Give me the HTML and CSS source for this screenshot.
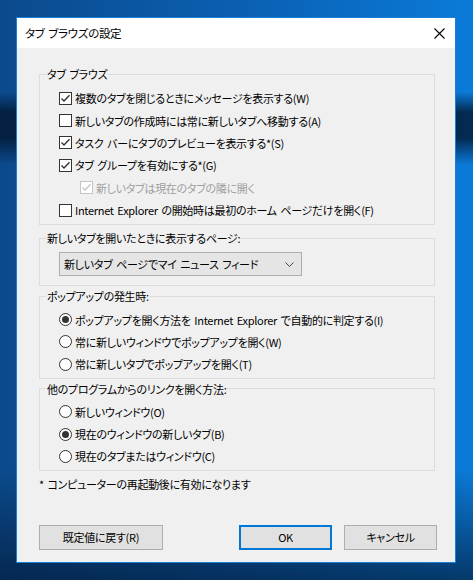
FILE: index.html
```html
<!DOCTYPE html>
<html lang="ja">
<head>
<meta charset="utf-8">
<title>タブ ブラウズの設定</title>
<link rel="stylesheet" href="styles.css">
</head>
<body>
<div class="dialog">
  <div class="titlebar">
    <span class="title">タブ ブラウズの設定</span>
    <span class="close" aria-label="閉じる">
      <svg width="11" height="11" viewBox="0 0 11 11"><path d="M0.5 0.5 L10.5 10.5 M10.5 0.5 L0.5 10.5" stroke="#000" stroke-width="1.1" fill="none"/></svg>
    </span>
  </div>

  <div class="content">
    <fieldset class="group group-tabs">
      <legend>タブ ブラウズ</legend>
      <label class="opt"><span class="box"><svg viewBox="0 0 13 13"><polyline points="2.5,6.5 5,9 10.5,3.2" class="tick"/></svg></span>複数のタブを閉じるときにメッセージを表示する(W)</label>
      <label class="opt"><span class="box"></span>新しいタブの作成時には常に新しいタブへ移動する(A)</label>
      <label class="opt"><span class="box"><svg viewBox="0 0 13 13"><polyline points="2.5,6.5 5,9 10.5,3.2" class="tick"/></svg></span>タスク バーにタブのプレビューを表示する*(S)</label>
      <label class="opt"><span class="box"><svg viewBox="0 0 13 13"><polyline points="2.5,6.5 5,9 10.5,3.2" class="tick"/></svg></span>タブ グループを有効にする*(G)</label>
      <label class="opt sub disabled"><span class="box"><svg viewBox="0 0 13 13"><polyline points="2.5,6.5 5,9 10.5,3.2" class="tick"/></svg></span>新しいタブは現在のタブの隣に開く</label>
      <label class="opt"><span class="box"></span>Internet Explorer の開始時は最初のホーム ページだけを開く(F)</label>
    </fieldset>

    <fieldset class="group group-newtab">
      <legend>新しいタブを開いたときに表示するページ:</legend>
      <div class="select">
        <span>新しいタブ ページでマイ ニュース フィード</span>
        <svg width="9" height="5" viewBox="0 0 9 5"><polyline points="0.5,0.5 4.5,4.5 8.5,0.5" fill="none" stroke="#444" stroke-width="1"/></svg>
      </div>
    </fieldset>

    <fieldset class="group group-popup">
      <legend>ポップアップの発生時:</legend>
      <label class="opt"><span class="radio on"></span>ポップアップを開く方法を Internet Explorer で自動的に判定する(I)</label>
      <label class="opt"><span class="radio"></span>常に新しいウィンドウでポップアップを開く(W)</label>
      <label class="opt"><span class="radio"></span>常に新しいタブでポップアップを開く(T)</label>
    </fieldset>

    <fieldset class="group group-links">
      <legend>他のプログラムからのリンクを開く方法:</legend>
      <label class="opt"><span class="radio"></span>新しいウィンドウ(O)</label>
      <label class="opt"><span class="radio on"></span>現在のウィンドウの新しいタブ(B)</label>
      <label class="opt"><span class="radio"></span>現在のタブまたはウィンドウ(C)</label>
    </fieldset>

    <p class="note">* コンピューターの再起動後に有効になります</p>

    <div class="buttons">
      <button class="btn btn-reset">既定値に戻す(R)</button>
      <span class="spacer"></span>
      <button class="btn btn-ok">OK</button>
      <button class="btn btn-cancel">キャンセル</button>
    </div>
  </div>
</div>
</body>
</html>
```

FILE: styles.css
```css
* {
  box-sizing: border-box;
}

html, body {
  height: 100%;
}

body {
  margin: 0;
  padding: 17px 0 0 16px;
  font-family: "Noto Sans CJK JP", "Noto Sans", sans-serif;
  font-size: 11px;
  letter-spacing: -0.3px;
  word-spacing: 1.5px;
  font-feature-settings: "palt";
  color: #000;
  overflow: hidden;
  background:
    linear-gradient(180deg,
      rgba(2, 22, 48, 0) 0,
      rgba(2, 22, 48, 0) 92px,
      rgba(2, 22, 48, 0.8) 112px,
      rgba(2, 22, 48, 0.8) 138px,
      rgba(2, 22, 48, 0) 165px,
      rgba(2, 22, 48, 0) 470px,
      rgba(2, 22, 48, 0.65) 580px),
    linear-gradient(90deg, #0b4a8c 0, #0b5fb2 50%, #0a7bd9 100%);
}

/* window frame */
.dialog {
  width: 440px;
  height: 546px;
  border: 1px solid #1a7fd6;
  background: #f0f0f0;
  display: flex;
  flex-direction: column;
}

.titlebar {
  height: 30px;
  flex: none;
  background: #fff;
  display: flex;
  align-items: center;
  padding: 0 10px 0 8px;
}

.title {
  flex: 1;
  font-size: 11.5px;
  line-height: 14px;
  padding-bottom: 1px;
}

.close {
  width: 11px;
  height: 11px;
  display: flex;
}

.content {
  padding: 0 20px 0 22px;
  display: flex;
  flex-direction: column;
}

/* group boxes */
.group {
  margin: 0;
  padding: 0 0 0 19px;
  border: 1px solid #dcdcdc;
  min-width: 0;
}

.group legend {
  margin-left: -13px;
  padding: 0 1px;
  line-height: 14px;
}

.group-tabs {
  margin-top: 19px;
  padding-top: 6px;
  padding-bottom: 3px;
}

.group-newtab {
  margin-top: 6px;
  padding-top: 7px;
  padding-bottom: 9px;
}

.group-popup {
  margin-top: 3px;
  padding-top: 5px;
  padding-bottom: 2px;
}

.group-links {
  margin-top: 3px;
  padding-top: 5px;
  padding-bottom: 2px;
}

/* option rows */
.opt {
  height: 22.4px;
  display: flex;
  align-items: center;
  gap: 3px;
  white-space: nowrap;
  line-height: 14px;
}

.opt.sub {
  padding-left: 21px;
}

.opt.disabled {
  color: #a0a0a0;
}

.box {
  width: 13px;
  height: 13px;
  flex: none;
  border: 1px solid #333;
  background: #fff;
  display: flex;
}

.box svg {
  width: 13px;
  height: 13px;
  margin: -1px;
}

.tick {
  fill: none;
  stroke: #333;
  stroke-width: 1.4;
}

.disabled .box {
  border-color: #c4c4c4;
}

.disabled .tick {
  stroke: #c4c4c4;
}

.radio {
  width: 13px;
  height: 13px;
  flex: none;
  border: 1px solid #333;
  border-radius: 50%;
  background: #fff;
  display: flex;
  align-items: center;
  justify-content: center;
}

.radio.on::after {
  content: "";
  width: 7px;
  height: 7px;
  border-radius: 50%;
  background: #333;
}

/* dropdown */
.select {
  width: 243px;
  height: 24px;
  border: 1px solid #adadad;
  background: #e5e5e5;
  display: flex;
  align-items: center;
  justify-content: space-between;
  padding: 0 7px 0 4px;
  line-height: 14px;
}

.note {
  margin: 6px 0 0;
  line-height: 14px;
}

/* buttons */
.buttons {
  margin-top: 34px;
  margin-right: -2px;
  display: flex;
  gap: 12px;
}

.spacer {
  flex: 1;
}

.btn {
  height: 25px;
  margin: 0;
  padding: 0;
  font: inherit;
  letter-spacing: inherit;
  word-spacing: inherit;
  color: #000;
  background: #e1e1e1;
  border: 1px solid #adadad;
  line-height: 14px;
}

.btn-reset {
  width: 124px;
}

.btn-ok {
  width: 93px;
  border: 2px solid #0078d7;
}

.btn-cancel {
  width: 93px;
}
```
